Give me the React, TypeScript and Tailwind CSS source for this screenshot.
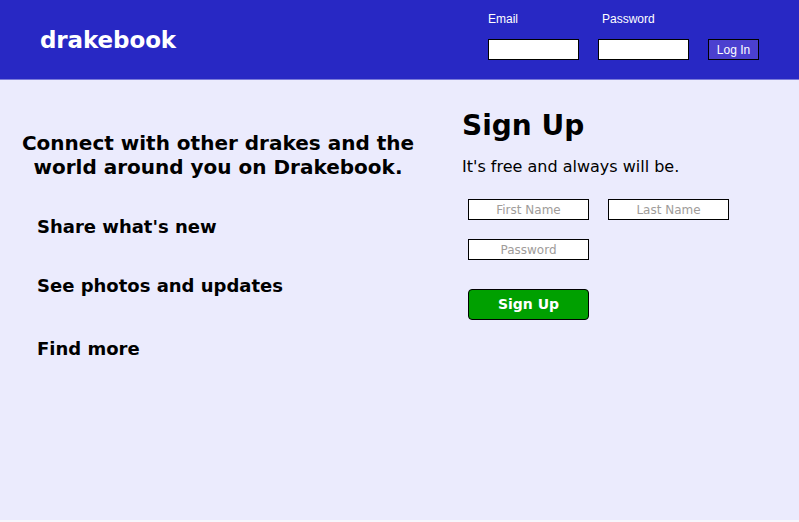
import React from "react";

const verdana = { fontFamily: '"DejaVu Sans", Verdana, sans-serif' };
const arial = { fontFamily: '"Liberation Sans", Arial, sans-serif' };

export default function App() {
  return (
    <div className="w-[799px] h-[522px] bg-[#f6f6fc] overflow-hidden" style={verdana}>
      <div className="h-[520px] bg-[#ebebfd]">
        <header className="h-[80px] bg-[#2828c4] border-b border-[#7b7bd9] flex items-start">
          <div className="w-[488px] pl-[40px] pt-[26px]">
            <h1 className="text-[23px] leading-[28px] font-bold text-white tracking-[-0.1px]">drakebook</h1>
          </div>
          <div className="flex items-start pt-[12px]" style={arial}>
            <div className="flex flex-col w-[110px]">
              <label className="text-[12px] leading-[15px] text-white">Email</label>
              <input className="mt-[12px] w-[91px] h-[21px] bg-white border border-black outline-none" />
            </div>
            <div className="flex flex-col w-[110px]">
              <label className="text-[12px] leading-[15px] text-white pl-[4px]">Password</label>
              <input type="password" className="mt-[12px] w-[91px] h-[21px] bg-white border border-black outline-none" />
            </div>
            <button className="mt-[27px] w-[51px] h-[21px] bg-[#4b40cf] border border-black text-white text-[12px] leading-none">
              Log In
            </button>
          </div>
        </header>
        <main className="flex">
          <section className="w-[436px] pt-[51px]">
            <h2 className="text-center text-[20px] leading-[24px] font-bold text-black">
              Connect with other drakes and the
              <br />
              world around you on Drakebook.
            </h2>
            <ul className="pl-[37px] mt-[37px] text-[18px] leading-[22px] font-bold text-black">
              <li>Share what's new</li>
              <li className="mt-[37px]">See photos and updates</li>
              <li className="mt-[41px]">Find more</li>
            </ul>
          </section>
          <section className="pl-[26px] pt-[29px]">
            <h2 className="text-[28px] leading-[34px] font-bold text-black">Sign Up</h2>
            <p className="mt-[14px] text-[16px] leading-[20px] text-black">It's free and always will be.</p>
            <div className="pl-[6px] mt-[22px]">
              <div className="flex gap-[19px]">
                <input
                  placeholder="First Name"
                  className="w-[121px] h-[21px] bg-white border border-black text-center text-[12px] placeholder:text-[#a09c9a] outline-none"
                />
                <input
                  placeholder="Last Name"
                  className="w-[121px] h-[21px] bg-white border border-black text-center text-[12px] placeholder:text-[#a09c9a] outline-none"
                />
              </div>
              <input
                type="password"
                placeholder="Password"
                className="mt-[19px] block w-[121px] h-[21px] bg-white border border-black text-center text-[12px] placeholder:text-[#a09c9a] outline-none"
              />
              <button className="mt-[29px] block w-[121px] h-[31px] bg-[#00a000] border border-black rounded-[4px] text-white text-[14px] font-bold">
                Sign Up
              </button>
            </div>
          </section>
        </main>
      </div>
    </div>
  );
}
